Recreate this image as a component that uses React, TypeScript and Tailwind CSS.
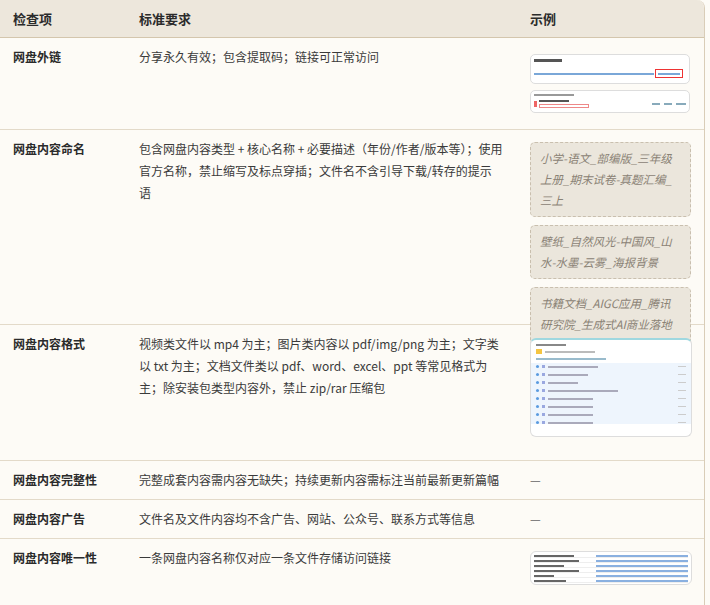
import React from "react";

const F = { fontFamily: '"Noto Sans CJK SC","Noto Sans",sans-serif' };

function Ex1() {
  return (
    <div className="flex flex-col gap-[6px] w-[160px]">
      <div className="h-[30px] rounded-[5px] border border-[#ddd] bg-white px-[3px] pt-[4px]">
        <div className="h-[3px] w-[28px] bg-[#555] mb-[7px]" />
        <div className="flex items-center">
          <div className="h-[2px] w-[120px] bg-[#7aa7d8]" />
          <div className="h-[9px] w-[28px] border border-[#e33] ml-[1px] flex items-center px-[2px]"><div className="h-[2px] w-full bg-[#7aa7d8]" /></div>
        </div>
      </div>
      <div className="h-[23px] rounded-[5px] border border-[#ddd] bg-white px-[3px] pt-[3px]">
        <div className="h-[2px] w-[40px] bg-[#999] mb-[4px]" />
        <div className="flex items-center gap-[2px]">
          <div className="w-[3px] h-[6px] bg-[#e66]" />
          <div className="flex flex-col gap-[2px]"><div className="h-[2px] w-[30px] bg-[#555]" /><div className="h-[4px] w-[50px] border border-[#e88]" /></div>
          <div className="ml-auto flex gap-[4px]"><div className="h-[2px] w-[8px] bg-[#8ab]" /><div className="h-[2px] w-[8px] bg-[#8ab]" /><div className="h-[2px] w-[10px] bg-[#8ab]" /></div>
        </div>
      </div>
    </div>
  );
}

function Ex3() {
  return (
    <div className="w-[162px] h-[99px] rounded-[6px] border border-[#ddd] border-t-[#9fd8e0] border-t-2 bg-white overflow-hidden">
      <div className="px-[5px] pt-[4px]">
        <div className="h-[2px] w-[30px] bg-[#888] mb-[3px]" />
        <div className="flex gap-[3px] items-center mb-[4px]"><div className="w-[6px] h-[5px] bg-[#f5c542]" /><div className="h-[2px] w-[50px] bg-[#bbb]" /></div>
        <div className="h-[2px] w-[70px] bg-[#9bc] mb-[3px]" />
      </div>
      <div className="bg-[#eef5fd] pt-[2px] px-[5px] flex flex-col gap-[5px]">
        {[50, 40, 30, 70, 45, 45, 45, 45].map((w, i) => (
          <div key={i} className="flex items-center gap-[3px]">
            <div className="w-[3px] h-[3px] rounded-full bg-[#5b9be0]" />
            <div className="w-[3px] h-[3px] bg-[#9aa8e0]" />
            <div className="h-[2px] bg-[#aab]" style={{ width: w }} />
            <div className="ml-auto h-[1px] w-[8px] bg-[#ccc]" />
          </div>
        ))}
      </div>
    </div>
  );
}

function Ex6() {
  return (
    <div className="w-[162px] h-[34px] rounded-[6px] border border-[#ddd] bg-white px-[3px] py-[3px] flex flex-col gap-[2px]">
      {[40, 45, 30, 45, 20, 32].map((w, i) => (
        <div key={i} className="flex items-center gap-[4px] border-b border-[#eee]">
          <div className="w-[58px]"><div className="h-[2px] bg-[#666]" style={{ width: w }} /></div>
          <div className="h-[2px] w-[92px] bg-[#8ab0e0]" />
        </div>
      ))}
    </div>
  );
}

const Name = ({ t }: { t: string }) => (
  <div className="w-[161px] mb-[8px] rounded-[5px] border border-dashed border-[#c9bfae] bg-[#ebe6dc] px-[9px] py-[5px] text-[11.5px] leading-[21px] italic text-[#8a8275]">{t}</div>
);

const rows: { a: string; b: string; c: React.ReactNode; h: string }[] = [
  { a: "网盘外链", b: "分享永久有效；包含提取码；链接可正常访问", c: <Ex1 />, h: "h-[92px]" },
  {
    a: "网盘内容命名",
    b: "包含网盘内容类型 + 核心名称 + 必要描述（年份/作者/版本等）；使用官方名称，禁止缩写及标点穿插；文件名不含引导下载/转存的提示语",
    c: (
      <div>
        <Name t="小学-语文_部编版_三年级上册_期末试卷-真题汇编_三上" />
        <Name t="壁纸_自然风光-中国风_山水-水墨-云雾_海报背景" />
        <Name t="书籍文档_AIGC应用_腾讯研究院_生成式AI商业落地趋势报告" />
      </div>
    ),
    h: "h-[195px]",
  },
  {
    a: "网盘内容格式",
    b: "视频类文件以 mp4 为主；图片类内容以 pdf/img/png 为主；文字类以 txt 为主；文档文件类以 pdf、word、excel、ppt 等常见格式为主；除安装包类型内容外，禁止 zip/rar 压缩包",
    c: <Ex3 />,
    h: "h-[136px]",
  },
  { a: "网盘内容完整性", b: "完整成套内容需内容无缺失；持续更新内容需标注当前最新更新篇幅", c: <span>—</span>, h: "h-[39px]" },
  { a: "网盘内容广告", b: "文件名及文件内容均不含广告、网站、公众号、联系方式等信息", c: <span>—</span>, h: "h-[39px]" },
  { a: "网盘内容唯一性", b: "一条网盘内容名称仅对应一条文件存储访问链接", c: <Ex6 />, h: "h-[70px]" },
];

export default function App() {
  return (
    <div className="w-[710px] h-[605px] overflow-hidden bg-[#fdfbf6]" style={F}>
      <div className="w-[705px] border-r border-[#d9cdb8] rounded-tr-[8px] overflow-hidden">
        <div className="flex h-[38px] items-center bg-[#ede7dc] border-b border-[#d4c6ad] text-[13px] font-bold text-[#2b2b2b]">
          <div className="w-[139px] pl-[13px]">检查项</div>
          <div className="w-[378px]">标准要求</div>
          <div className="pl-[13px]">示例</div>
        </div>
        {rows.map((r, i) => (
          <div key={i} className={`flex ${r.h} border-b border-[#e3dac9] text-[12px] leading-[22px] text-[#3a3a3a]`}>
            <div className="w-[139px] pl-[13px] pt-[8px] font-bold text-[#2b2b2b]">{r.a}</div>
            <div className="w-[378px] pt-[8px] pr-[14px]">{r.b}</div>
            <div className={`pl-[13px] ${i === 3 || i === 4 ? "pt-[8px] text-[#666]" : i === 0 ? "pt-[16px]" : i === 2 ? "pt-[13px]" : "pt-[12px]"}`}>{r.c}</div>
          </div>
        ))}
      </div>
    </div>
  );
}
